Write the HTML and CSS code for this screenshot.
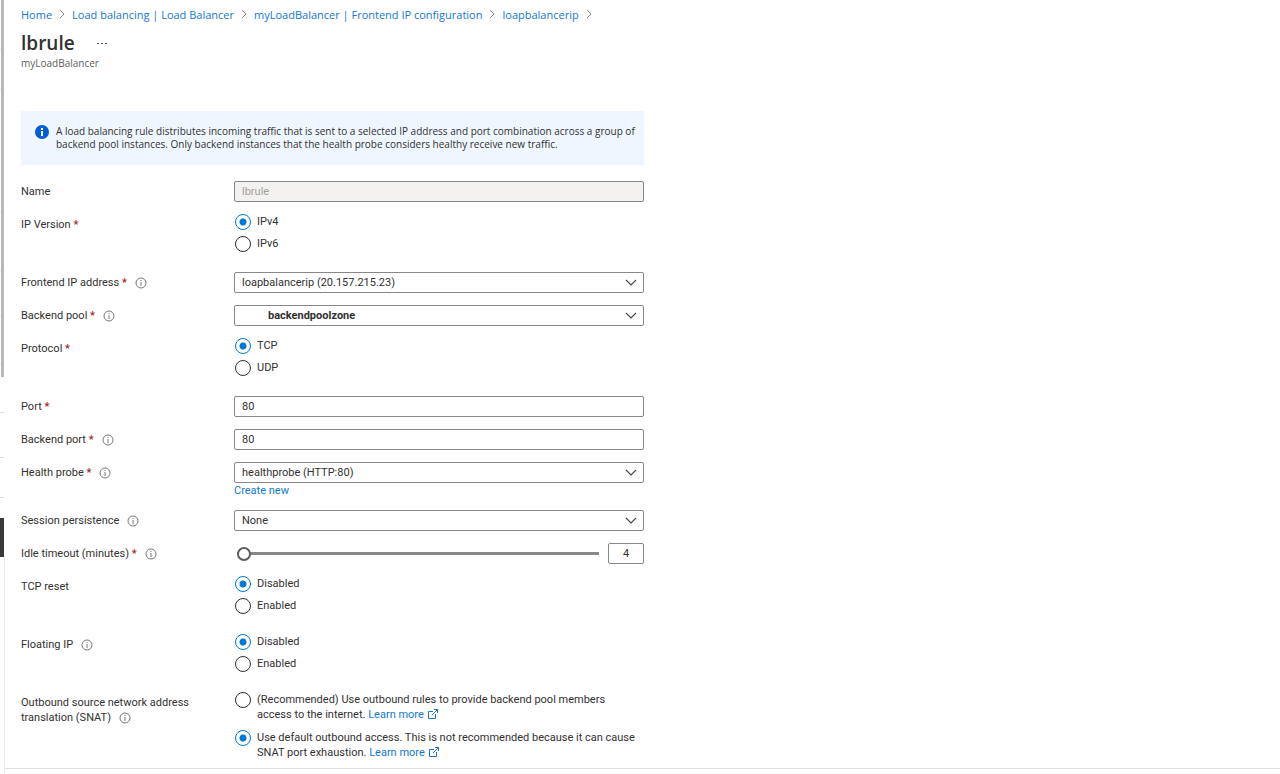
FILE: index.html
```
<!DOCTYPE html>
<html lang="en">
<head>
    <meta charset="UTF-8">
    <meta name="viewport" content="width=device-width, initial-scale=1.0">
    <title>lbrule - Load balancing rule</title>
    <link rel="stylesheet" href="styles.css">
</head>
<body>

    <!-- Shared icons -->
    <svg class="sprite" aria-hidden="true">
        <symbol id="chevron-right" viewBox="0 0 6 10"><path d="M1 1l4 4-4 4" fill="none" stroke="#8a8886"/></symbol>
        <symbol id="chevron-down" viewBox="0 0 12 8"><path d="M1 1l5 5 5-5" fill="none" stroke="#484644" stroke-width="1.1"/></symbol>
        <symbol id="info" viewBox="0 0 12 12">
            <circle cx="6" cy="6" r="5" fill="none" stroke="#797775"/>
            <path d="M6 5v4M6 3v1" stroke="#797775"/>
        </symbol>
        <symbol id="external" viewBox="0 0 10 10">
            <path d="M5 2.500H.5v7h7V5M6 .5h3.500V4M9.500.5L4 6" fill="none" stroke="#1b74d0"/>
        </symbol>
    </svg>

    <div class="layout">
        <!-- Edge of the side menu -->
        <div class="rail">
            <div class="rail-scroll"></div>
            <div class="rail-list">
                <span></span><span></span><span></span><span></span><span></span><span></span><span></span><span></span><span></span>
            </div>
            <div class="rail-active"></div>
            <div class="rail-rest"></div>
        </div>

        <div class="blade">
            <main class="content">
                <nav class="breadcrumb" aria-label="Breadcrumb">
                    <a href="#">Home</a>
                    <svg><use href="#chevron-right"/></svg>
                    <a href="#">Load balancing | Load Balancer</a>
                    <svg><use href="#chevron-right"/></svg>
                    <a href="#">myLoadBalancer | Frontend IP configuration</a>
                    <svg><use href="#chevron-right"/></svg>
                    <a href="#">loapbalancerip</a>
                    <svg><use href="#chevron-right"/></svg>
                </nav>

                <header class="header">
                    <div class="title">
                        <h1>lbrule</h1>
                        <button class="more" type="button" aria-label="More">
                            <svg viewBox="0 0 10 2"><path d="M0 0h2v1H0zM4 0h2v1H4zM8 0h2v1H8z" fill="#484644"/></svg>
                        </button>
                    </div>
                    <p>myLoadBalancer</p>
                </header>

                <form class="form">
                    <div class="notice">
                        <svg viewBox="0 0 14 14">
                            <circle cx="7" cy="7" r="7" fill="#015cda"/>
                            <path d="M6 3h2v2H6zM6 6h2v5H6z" fill="#fff"/>
                        </svg>
                        <p>A load balancing rule distributes incoming traffic that is sent to a selected IP address and port combination across a group of backend pool instances. Only backend instances that the health probe considers healthy receive new traffic.</p>
                    </div>

                    <div class="row">
                        <label class="label" for="name">Name</label>
                        <input class="box" type="text" id="name" value="lbrule" disabled>
                    </div>

                    <div class="row" role="radiogroup" aria-labelledby="ipVersion">
                        <div class="label" id="ipVersion">IP Version <b>*</b></div>
                        <div class="radios">
                            <label><input type="radio" name="ip" checked><span>IPv4</span></label>
                            <label><input type="radio" name="ip"><span>IPv6</span></label>
                        </div>
                    </div>

                    <div class="row">
                        <label class="label" for="frontend">Frontend IP address <b>*</b><svg class="info"><use href="#info"/></svg></label>
                        <div class="dropdown">
                            <select class="box" id="frontend"><option>loapbalancerip (20.157.215.23)</option></select>
                            <svg><use href="#chevron-down"/></svg>
                        </div>
                    </div>

                    <div class="row">
                        <label class="label" for="pool">Backend pool <b>*</b><svg class="info"><use href="#info"/></svg></label>
                        <div class="dropdown">
                            <select class="box pool" id="pool"><option>backendpoolzone</option></select>
                            <svg><use href="#chevron-down"/></svg>
                        </div>
                    </div>

                    <div class="row" role="radiogroup" aria-labelledby="protocol">
                        <div class="label" id="protocol">Protocol <b>*</b></div>
                        <div class="radios">
                            <label><input type="radio" name="protocol" checked><span>TCP</span></label>
                            <label><input type="radio" name="protocol"><span>UDP</span></label>
                        </div>
                    </div>

                    <div class="row">
                        <label class="label" for="port">Port <b>*</b></label>
                        <input class="box" type="text" id="port" value="80">
                    </div>

                    <div class="row">
                        <label class="label" for="backendPort">Backend port <b>*</b><svg class="info"><use href="#info"/></svg></label>
                        <input class="box" type="text" id="backendPort" value="80">
                    </div>

                    <div class="row">
                        <label class="label" for="probe">Health probe <b>*</b><svg class="info"><use href="#info"/></svg></label>
                        <div>
                            <div class="dropdown">
                                <select class="box" id="probe"><option>healthprobe (HTTP:80)</option></select>
                                <svg><use href="#chevron-down"/></svg>
                            </div>
                            <a class="create" href="#">Create new</a>
                        </div>
                    </div>

                    <div class="row">
                        <label class="label" for="session">Session persistence<svg class="info"><use href="#info"/></svg></label>
                        <div class="dropdown">
                            <select class="box" id="session"><option>None</option></select>
                            <svg><use href="#chevron-down"/></svg>
                        </div>
                    </div>

                    <div class="row">
                        <label class="label" for="idle">Idle timeout (minutes) <b>*</b><svg class="info"><use href="#info"/></svg></label>
                        <div class="slider">
                            <input type="range" id="idle" min="4" max="100" value="4">
                            <input class="box" type="text" value="4" aria-label="Idle timeout value">
                        </div>
                    </div>

                    <div class="row" role="radiogroup" aria-labelledby="tcpReset">
                        <div class="label" id="tcpReset">TCP reset</div>
                        <div class="radios">
                            <label><input type="radio" name="reset" checked><span>Disabled</span></label>
                            <label><input type="radio" name="reset"><span>Enabled</span></label>
                        </div>
                    </div>

                    <div class="row" role="radiogroup" aria-labelledby="floatingIp">
                        <div class="label" id="floatingIp">Floating IP<svg class="info"><use href="#info"/></svg></div>
                        <div class="radios">
                            <label><input type="radio" name="floating" checked><span>Disabled</span></label>
                            <label><input type="radio" name="floating"><span>Enabled</span></label>
                        </div>
                    </div>

                    <div class="row" role="radiogroup" aria-labelledby="snat">
                        <div class="label" id="snat">Outbound source network address translation (SNAT)<svg class="info"><use href="#info"/></svg></div>
                        <div class="radios long">
                            <label><input type="radio" name="snat"><span>(Recommended) Use outbound rules to provide backend pool members<br>access to the internet. <a href="#">Learn more<svg><use href="#external"/></svg></a></span></label>
                            <label><input type="radio" name="snat" checked><span>Use default outbound access. This is not recommended because it can cause<br>SNAT port exhaustion. <a href="#">Learn more<svg><use href="#external"/></svg></a></span></label>
                        </div>
                    </div>
                </form>
            </main>
        </div>
    </div>

</body>
</html>
```
FILE: styles.css
```
/* General Styles */
* { box-sizing: border-box; }
body { margin: 0; font-family: "Open Sans", "Noto Sans", sans-serif; font-size: 11px; line-height: 15px; color: #323130; background-color: #fff; }
a { color: #1477d1; text-decoration: none; }
h1, p { margin: 0; }
.sprite { display: none; }
.layout { display: flex; min-height: 100vh; }

/* Side menu edge */
.rail { position: relative; display: flex; flex-direction: column; width: 5px; flex: none; }
.rail-scroll { position: absolute; top: 0; left: 1px; width: 3px; height: 377px; background-color: #b8b8b8; }
.rail-list { display: grid; grid-template-rows: 50px 40px 123px 58px 45px 48px 49px 45px 40px; height: 518px; }
.rail-list span { width: 4px; border-bottom: 1px solid #e1dfdd; }
.rail-active { width: 4px; height: 39px; background-color: #3b3a39; }
.rail-rest { flex: 1; border-right: 1px solid #edebe9; }

/* Blade */
.blade { flex: 1; }
.content { padding: 6px 16px 8px; border-bottom: 1px solid #e1dfdd; }

/* Breadcrumb */
.breadcrumb { display: flex; align-items: center; gap: 7px; height: 16px; }
.breadcrumb svg { width: 6px; height: 10px; }

/* Header */
.header { margin-top: 9px; }
.title { display: flex; align-items: center; gap: 22px; height: 25px; }
.title h1 { font-size: 19px; line-height: 25px; font-weight: 600; }
.more { display: flex; padding: 0; border: none; background: none; cursor: pointer; }
.more svg { width: 10px; height: 2px; }
.header p { font-size: 10px; line-height: 15px; color: #605e5c; }

/* Info box */
.form { max-width: 623px; margin-top: 40px; display: flex; flex-direction: column; gap: 12px; font-family: Roboto, "Open Sans", sans-serif; }
.notice { display: flex; gap: 7px; padding: 14px 7px 14px 14px; margin-bottom: 4px; background-color: #eff6ff; }
.notice svg { width: 14px; height: 14px; flex: none; }
.notice p { font-family: "Open Sans", "Noto Sans", sans-serif; font-size: 10px; line-height: 13px; }

/* Form rows */
.row { display: grid; grid-template-columns: 182px 1fr; column-gap: 31px; }
.label { padding-top: 3px; }
.label b { color: #a4262c; font-weight: 600; }
.info { width: 12px; height: 12px; margin-left: 8px; vertical-align: -3px; }

/* Inputs */
.box { display: block; width: 100%; height: 21px; padding: 0 7px; border: 1px solid #8a8886; border-radius: 2px; background-color: #fff; font: inherit; color: inherit; appearance: none; }
.box:disabled { background-color: #f3f2f1; color: #a19f9d; }
.pool { padding-left: 33px; font-weight: 700; }
.dropdown { display: grid; align-items: center; }
.dropdown > * { grid-area: 1 / 1; }
.dropdown svg { width: 12px; height: 8px; margin-right: 7px; justify-self: end; pointer-events: none; }
.create { display: block; }

/* Radios */
.radios { display: flex; flex-direction: column; gap: 6px; min-height: 46px; }
.radios label { display: flex; gap: 6px; padding-left: 1px; }
.radios input { flex: none; width: 16px; height: 16px; margin: 0; appearance: none; border: 1px solid #323130; border-radius: 50%; background-color: #fff; }
.radios input:checked { border-color: #0078d4; background: radial-gradient(circle, #0078d4 3px, #fff 4px); }
.radios svg { width: 10px; height: 10px; margin-left: 4px; vertical-align: -1px; }
.long { gap: 8px; }

/* Slider */
.slider { display: flex; align-items: center; gap: 9px; }
.slider input[type="range"] { flex: 1; min-width: 0; height: 14px; margin: 0 0 0 3px; appearance: none; background: linear-gradient(#8a8886, #8a8886) center / 100% 3px no-repeat; }
.slider input[type="range"]::-webkit-slider-thumb { appearance: none; width: 14px; height: 14px; border: 2px solid #605e5c; border-radius: 50%; background-color: #fff; }
.slider .box { width: 36px; text-align: center; }
```
